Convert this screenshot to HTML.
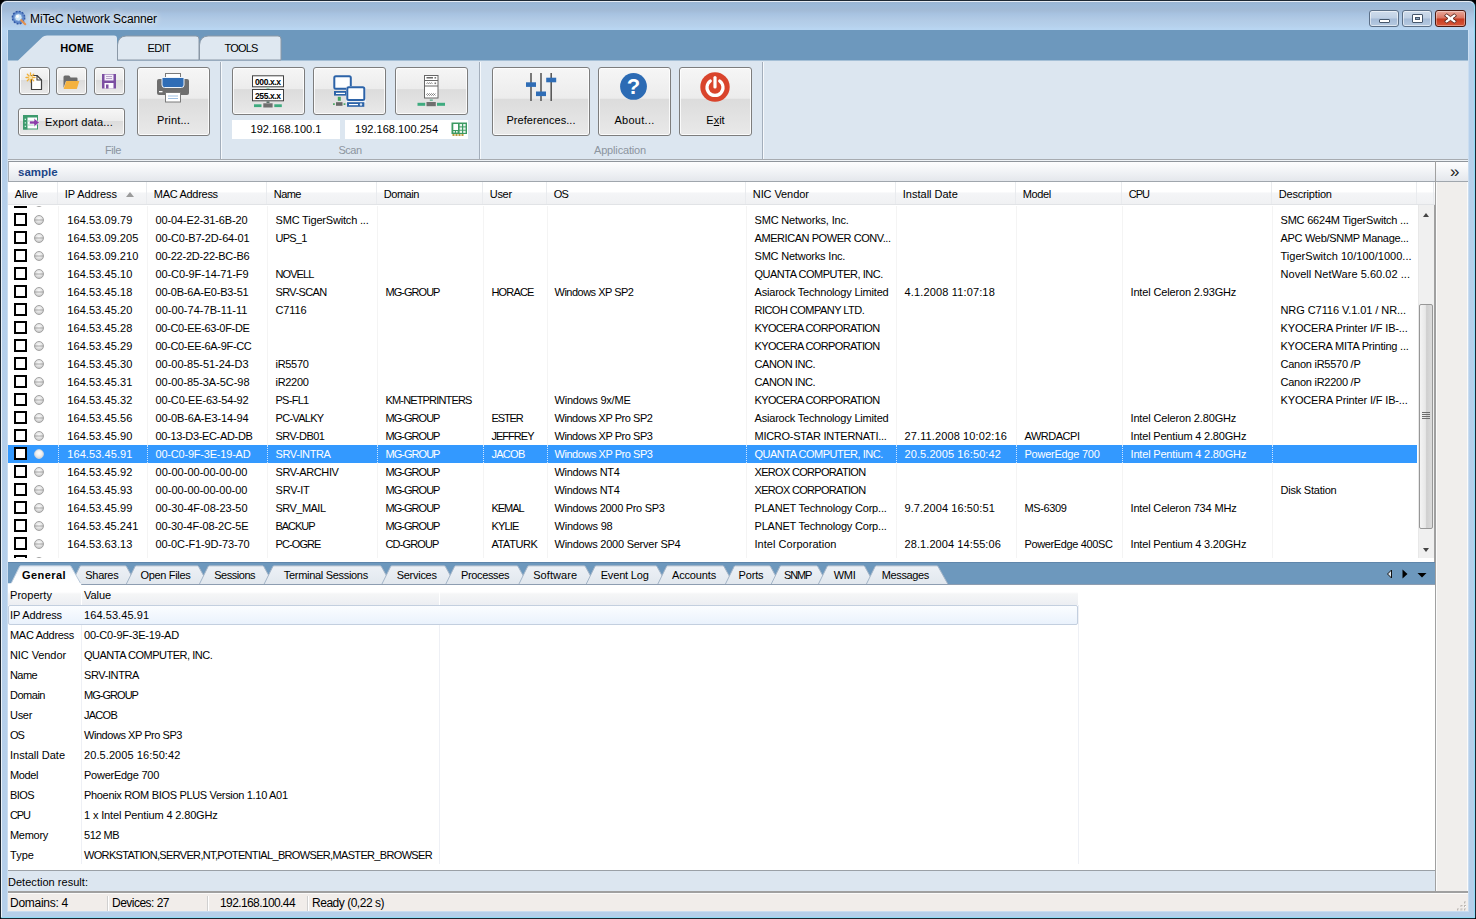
<!DOCTYPE html>
<html lang="en"><head><meta charset="utf-8"><title>MiTeC Network Scanner</title>
<style>
html,body{margin:0;padding:0;}
body{width:1476px;height:919px;overflow:hidden;position:relative;background:#000;font-family:"Liberation Sans",sans-serif;font-size:11px;color:#000;}
div,span,i,b{box-sizing:border-box;}
i,b{font-style:normal;font-weight:normal;}
/* window frame */
#frame{position:absolute;left:0;top:0;width:1476px;height:919px;border-radius:7px 7px 2px 2px;background:linear-gradient(#9ab5d3 1px,#9bb9d9 4px,#a2bad6 9px,#a8c3e1 13px,#b2cbe6 19px,#b6d1ec 25px,#b9d6f2 28px,#b6d0eb 60px,#b5cfea 100%);border:1px solid #1c2733;}
#frame:before{content:"";position:absolute;left:0;top:0;right:0;bottom:0;border-radius:6px 6px 1px 1px;border:1px solid rgba(255,255,255,.75);border-right-color:#8fdcf6;border-bottom-color:#8fdcf6;}
#frameedge{position:absolute;left:7px;top:30px;width:1462px;height:882px;border:1px solid rgba(255,255,255,.28);border-top:none;}
#title{position:absolute;left:30px;top:11px;font-size:12px;line-height:16px;color:#000;white-space:nowrap;text-shadow:0 0 6px #fff,0 0 8px #fff;}
#appicon{position:absolute;left:11px;top:10px;width:16px;height:16px;}
.capbtn{position:absolute;top:10px;height:17px;width:30px;border:1px solid #5b6f87;border-radius:3px;background:linear-gradient(#cfdcec 0,#bfd0e4 48%,#a5bbd7 52%,#b6cae1 100%);box-shadow:inset 0 0 0 1px rgba(255,255,255,.55);}
.capbtn.close{border-color:#4a1a12;background:linear-gradient(#e9a99b 0,#d9735f 48%,#c5391f 52%,#d8583a 100%);box-shadow:inset 0 0 0 1px rgba(255,255,255,.35);}
.capbtn svg{position:absolute;left:0;top:0;}
/* client */
#client{position:absolute;left:8px;top:30px;width:1460px;height:881px;background:#dce6f0;}
#tabstrip{position:absolute;left:8px;top:30px;width:1460px;height:31px;background:#6d98bd;}
#tabstrip svg{position:absolute;left:0;top:0;}
.rtab{position:absolute;top:41px;font-size:11px;line-height:14px;text-align:center;white-space:nowrap;}
#ribbon{position:absolute;left:8px;top:60.5px;width:1460px;height:99.5px;background:#dce6f0;border-bottom:1px solid #a7abb0;}
#ribgap{position:absolute;left:8px;top:160px;width:1460px;height:1px;background:#eef2f6;}
.rsep{position:absolute;top:62px;width:2px;height:97px;border-left:1px solid #a3aebb;border-right:1px solid #f6f9fc;}
.glabel{position:absolute;top:143px;font-size:11px;line-height:14px;color:#8c959f;text-align:center;white-space:nowrap;}
.btn{position:absolute;border:1px solid #7d7d7d;border-radius:3px;background:linear-gradient(#f6f6f6 0,#ececec 45%,#dcdcdc 47%,#e9e9e9 100%);box-shadow:inset 0 0 0 1px rgba(255,255,255,.8);}
.btn svg,.ipf svg{position:absolute;}
.btn .t{position:absolute;left:0;right:0;text-align:center;font-size:11px;line-height:14px;white-space:nowrap;}
.ipf{position:absolute;top:120px;height:19px;background:#fff;font-size:11px;line-height:19px;text-align:center;white-space:nowrap;}
/* sample bar */
#samplebar{position:absolute;left:8px;top:161px;width:1427px;height:21px;border-top:1px solid #8f959c;border-left:1px solid #a9afb6;border-bottom:1px solid #a0a6ad;background:linear-gradient(#fdfdfe 0,#f1f3f6 50%,#e4e7ec 100%);}
#samplebar span{position:absolute;left:9px;top:3px;font-weight:bold;color:#1c4587;font-size:11.5px;line-height:14px;}
#sidecap{position:absolute;left:1436px;top:161px;width:32px;height:21px;border-top:1px solid #8f959c;border-bottom:1px solid #a0a6ad;background:linear-gradient(#fdfdfe 0,#f1f3f6 50%,#e4e7ec 100%);}
#sidecap span{position:absolute;left:14px;top:0.5px;font-size:17px;line-height:18px;color:#222;}
#sidepanel{position:absolute;left:1436px;top:182px;width:32px;height:709px;background:#f0eeec;border-left:1px solid #fbfbfb;border-right:1px solid #fbfbfb;}
.vline{position:absolute;left:1434px;top:161px;width:2px;height:730px;background:#a0a0a0;}
/* list */
#list{position:absolute;left:8px;top:206px;width:1409px;height:352px;background:#fff;overflow:hidden;}
#listbg{position:absolute;left:8px;top:183px;width:1427px;height:380px;background:#fff;}
.row{position:absolute;left:0;width:1409px;height:18px;line-height:18px;white-space:nowrap;}
.row .c{position:absolute;top:0;height:18px;padding-left:8.5px;overflow:hidden;}
.row.sel{background:#3399ff;color:#fff;}
.row.sel .c{border-left:1px dotted #cfe6ff;padding-left:7.5px;}
.cb{position:absolute;left:6px;top:2px;width:13px;height:13px;border:2px solid #000;background:#fff;}
.led{position:absolute;left:26px;top:4px;width:10px;height:10px;border-radius:50%;border:1px solid #a9a9a9;background:linear-gradient(transparent 40%,rgba(125,125,125,.5) 46%,rgba(125,125,125,.5) 54%,transparent 60%),radial-gradient(circle at 50% 38%,#fbfbfb 0,#e4e4e4 45%,#b8b8b8 100%);border-color:#a2a2a2;}
.row.sel .led{border-color:#c9d3df;background:radial-gradient(circle at 50% 38%,#fff 0,#efefef 45%,#cfcfcf 100%);}
#lhead{position:absolute;left:8px;top:182px;width:1427px;height:23px;background:linear-gradient(#fff 0,#fff 45%,#f4f5f7 50%,#f0f1f3 100%);border-bottom:1px solid #e1e3e6;}
#lhead .h{position:absolute;top:0;height:22px;line-height:24px;padding-left:6.8px;border-right:1px solid #e9ebee;white-space:nowrap;}
.sortup{position:absolute;left:68px;top:10px;width:0;height:0;border-left:4.5px solid transparent;border-right:4.5px solid transparent;border-bottom:5px solid #9b9b9b;}
/* vscroll */
#vs{position:absolute;left:1418px;top:205px;width:16px;height:353px;background:#f0f0f0;border-left:1px solid #e8e8e8;}
#vs .thumb{position:absolute;left:0px;top:99px;width:14px;height:225px;border:1px solid #979797;border-radius:2px;background:linear-gradient(90deg,#f4f4f4 0,#e8e8e8 45%,#cfcfcf 55%,#dcdcdc 100%);}
#vs .grp{position:absolute;left:3px;top:207px;width:8px;height:1px;background:#6e6e6e;box-shadow:0 2px 0 #6e6e6e,0 4px 0 #6e6e6e,0 6px 0 #6e6e6e;}
.tri-up{position:absolute;left:3.7px;top:8px;width:0;height:0;border-left:3.5px solid transparent;border-right:3.5px solid transparent;border-bottom:4px solid #444;}
.tri-dn{position:absolute;left:3.7px;top:343px;width:0;height:0;border-left:3.5px solid transparent;border-right:3.5px solid transparent;border-top:4px solid #444;}
/* bottom tabs */
#btabs{position:absolute;left:8px;top:562px;width:1427px;height:23px;background:#6d98bd;}
#btabs svg{position:absolute;left:0;top:0;}
.bt{position:absolute;top:568px;font-size:11px;line-height:14px;white-space:nowrap;text-align:center;}
/* prop grid */
#pgrid{position:absolute;left:8px;top:585px;width:1427px;height:285px;background:#fff;}
.phead{position:absolute;left:0;top:0;width:1070px;height:20px;line-height:20px;background:linear-gradient(#fff 0,#fff 35%,#f5f6f7 45%,#eceef2 100%);}
.phs{position:absolute;top:7px;width:1px;height:13px;background:#fff;}
.pk{position:absolute;left:2px;top:0;white-space:nowrap;}
.pv{position:absolute;left:76px;top:0;white-space:nowrap;}
.prow{position:absolute;left:0;width:1070px;height:20px;line-height:20px;}
.pcol{position:absolute;top:20px;width:1px;height:259px;background:#eef0f5;}
.phot{position:absolute;left:0;top:20px;width:1070px;height:20px;border:1px solid #c3cfdf;border-radius:2px;background:linear-gradient(#fbfdff 0,#eaf2fc 100%);}
#detect{position:absolute;left:8px;top:870px;width:1427px;height:21px;line-height:22px;background:#dce6f0;border-top:1px solid #9aa0a6;padding-left:0;}
#hline{position:absolute;left:8px;top:891px;width:1460px;height:2px;background:#a0a0a0;}
#status{position:absolute;left:8px;top:893px;width:1460px;height:18px;background:#f1edea;border-top:1px solid #fbfaf9;font-size:12px;line-height:19px;}
#status span{position:absolute;top:0;white-space:nowrap;}
#status i{position:absolute;top:2px;width:2px;height:15px;border-left:1px solid #d0d0d0;border-right:1px solid #fff;}
.grip{position:absolute;right:1px;bottom:1px;width:11px;height:11px;}
.tabarrows{position:absolute;left:1385px;top:568px;width:50px;height:12px;}

.gl{position:absolute;top:0;width:1px;height:352px;background:#f4f4f4;}

</style></head>
<body>
<div id="frame"></div>
<div id="frameedge"></div>
<div id="appicon"><svg width="16" height="16" viewBox="0 0 18 18"><circle cx="8.5" cy="8.5" r="7" fill="#5f87c9" stroke="#2f57a5" stroke-width="1.6" stroke-dasharray="2.2 1.4"/><circle cx="8.3" cy="8.3" r="4.2" fill="#cfe6f7" stroke="#7aa3d6" stroke-width="1"/><circle cx="7.3" cy="7.3" r="1.6" fill="#fff"/><path d="M11.5 11.5 L16 16" stroke="#e2904f" stroke-width="2.4" stroke-linecap="round"/></svg></div>
<div id="title"><span style="letter-spacing:-0.113px">MiTeC Network Scanner</span></div>
<div class="capbtn" style="left:1369px"><svg width="28" height="15"><rect x="9.500" y="8.500" width="10" height="3" fill="#fff" stroke="#45566b" stroke-width="1" rx=".5"/></svg></div>
<div class="capbtn" style="left:1402px"><svg width="28" height="15"><rect x="9.500" y="3.500" width="10" height="8" fill="#fff" stroke="#45566b" stroke-width="1" rx=".5"/><rect x="12.500" y="6.500" width="4" height="2" fill="#8da3bd" stroke="#45566b" stroke-width="1"/></svg></div>
<div class="capbtn close" style="left:1435px;width:31px"><svg width="29" height="15"><path d="M10.800 2.800 L14.500 5.600 L18.200 2.800 L20.600 4.800 L17 7.500 L20.600 10.200 L18.200 12.200 L14.500 9.400 L10.800 12.200 L8.400 10.200 L12 7.500 L8.400 4.800 Z" fill="#fff" stroke="#5e2a20" stroke-width="1" stroke-linejoin="round"/></svg></div>
<div id="client"></div>
<div id="tabstrip"><svg width="1460" height="31" viewBox="0 0 1460 31">
<path d="M0 31 L0 30.500 L10 30.500 L34.500 7 Q36 5.500 39 5.500 L106 5.500 Q109 5.500 109 8.500 L109 30.500 L1460 30.500 L1460 31 Z" fill="#dce6f0"/>
<path d="M109.500 30 L109.500 15 Q110 6.500 118 6 L188 6 Q191 6 191 9 L191 30 L109.500 30 Z" fill="#dfe8f1" stroke="#8b98a6" stroke-width="1"/>
<path d="M191.500 30 L191.500 15 Q192 6.500 200 6 L270 6 Q273 6 273 9 L273 30 L191.500 30 Z" fill="#dfe8f1" stroke="#8b98a6" stroke-width="1"/>
</svg></div>
<div class="rtab" style="left:44px;width:66px;font-weight:bold"><span style="letter-spacing:0.125px">HOME</span></div>
<div class="rtab" style="left:126px;width:66px"><span style="letter-spacing:-0.516px">EDIT</span></div>
<div class="rtab" style="left:208px;width:66px"><span style="letter-spacing:-0.819px">TOOLS</span></div>
<div id="ribbon"></div><div id="ribgap"></div>
<div class="rsep" style="left:220px"></div>
<div class="rsep" style="left:479px"></div>
<div class="rsep" style="left:762px"></div>
<div class="glabel" style="left:93px;width:40px"><span style="letter-spacing:-0.434px">File</span></div>
<div class="glabel" style="left:330px;width:40px"><span style="letter-spacing:-0.52px">Scan</span></div>
<div class="glabel" style="left:580px;width:80px"><span style="letter-spacing:-0.166px">Application</span></div>
<!-- file group -->
<div class="btn" style="left:19px;top:67px;width:31px;height:28px"><svg style="left:5px;top:4px" width="18" height="18" viewBox="0 0 18 18"><path d="M6.500 3.500 H12 L16.500 8 V17.500 H6.500 Z" fill="#fff" stroke="#3f3f3f" stroke-width="1.2" stroke-linejoin="round"/><path d="M12 3.500 V8 H16.500" fill="none" stroke="#3f3f3f" stroke-width="1.100"/><g stroke="#f1b13a" stroke-width="1.300" stroke-linecap="round"><path d="M5.500 1 V10"/><path d="M1 5.500 H10"/><path d="M2.300 2.300 L8.700 8.700"/><path d="M8.700 2.300 L2.300 8.700"/></g><circle cx="5.500" cy="5.500" r="1.700" fill="#fbe6ad"/></svg></div>
<div class="btn" style="left:56px;top:67px;width:31px;height:28px"><svg style="left:5px;top:4px" width="18" height="18" viewBox="0 0 18 18"><path d="M1.500 5 Q1.500 3.500 3 3.500 H6.500 Q7.500 3.500 8 4.500 L8.500 5.500 H14.500 Q15.500 5.500 15.500 6.500 V9 H4 L1.500 16 Z" fill="#6b6b6b"/><path d="M4.300 9 H17.300 L14.800 17 H1.600 Z" fill="#f4b23f"/></svg></div>
<div class="btn" style="left:94px;top:67px;width:31px;height:28px"><svg style="left:6px;top:5px" width="16" height="16" viewBox="0 0 16 16"><path d="M1 1 H15 V15.500 H1 Z" fill="#7c4fa2"/><rect x="3.500" y="1.500" width="9" height="6" fill="#f4eef9"/><path d="M5 3.500 H11 M5 5.500 H11" stroke="#b7a3c9" stroke-width="1"/><rect x="3.500" y="10" width="9" height="5.500" fill="#fdfbff"/><rect x="5" y="11.500" width="2.500" height="4" fill="#7c4fa2"/></svg></div>
<div class="btn" style="left:18px;top:108px;width:107px;height:28px"><svg style="left:4px;top:6px" width="17" height="15" viewBox="0 0 17 15"><rect x="0.500" y="0.500" width="14" height="13.500" fill="#fff" stroke="#3d9a6d" stroke-width="1"/><rect x="0" y="0" width="4.500" height="14.500" fill="#3d9a6d"/><rect x="0" y="0" width="15" height="2.500" fill="#3d9a6d"/><path d="M5 6 H14 M5 10 H14" stroke="#9fd2b8" stroke-width="1"/><g fill="#c8ecd9"><rect x="1.700" y="3.700" width="1.300" height="1.300"/><rect x="1.700" y="7.200" width="1.300" height="1.300"/><rect x="1.700" y="10.700" width="1.300" height="1.300"/></g><path d="M6.500 6 H11 V3.300 L16.500 7.500 L11 11.700 V9 H6.500 Z" fill="#8c3fa9" stroke="#fff" stroke-width=".6"/></svg><span class="t" style="left:26px;right:auto;top:6px"><span style="letter-spacing:0.19px">Export data...</span></span></div>
<div class="btn" style="left:137px;top:67px;width:73px;height:69px"><svg style="left:19px;top:5px" width="32" height="30" viewBox="0 0 32 30"><rect x="8.500" y="0.500" width="15" height="8" fill="#fff" stroke="#7a7a7a" stroke-width="1"/><rect x="0" y="6" width="32" height="16" rx="2" fill="#6e6e6e"/><path d="M5 4.500 H27 V12 Q27 14.500 24.500 14.500 H7.500 Q5 14.500 5 12 Z" fill="#2f6db6" stroke="#eef4fb" stroke-width="1"/><rect x="2" y="18" width="3.500" height="1.300" fill="#fff"/><rect x="8.500" y="19.500" width="15" height="9.500" fill="#fff" stroke="#7a7a7a" stroke-width="1"/><path d="M11 23 H21 M11 25.500 H21" stroke="#9fc0e2" stroke-width="1"/></svg><span class="t" style="top:45px"><span style="letter-spacing:0.163px">Print...</span></span></div>
<!-- scan group -->
<div class="btn" style="left:232px;top:67px;width:73px;height:48px"><svg style="left:17px;top:5px" width="38" height="38" viewBox="0 0 38 38"><rect x="2.500" y="2.800" width="31" height="11" fill="#fff" stroke="#404040" stroke-width="1"/><rect x="2.500" y="16.500" width="31" height="11.300" fill="#fff" stroke="#404040" stroke-width="1"/><rect x="16.500" y="14.300" width="3" height="1.700" fill="#9fd3bd"/><rect x="16.500" y="28.300" width="3" height="1.700" fill="#5d6f69"/><text x="18" y="11.500" text-anchor="middle" font-family="Liberation Sans, sans-serif" font-weight="bold" font-size="8.500" fill="#000" textLength="26">000.x.x</text><text x="18" y="25.500" text-anchor="middle" font-family="Liberation Sans, sans-serif" font-weight="bold" font-size="8.500" fill="#000" textLength="26">255.x.x</text><rect x="4" y="31.300" width="7.500" height="2.800" fill="#3eab7f"/><rect x="13.300" y="30.300" width="9.300" height="4.200" fill="#6f6f6f"/><rect x="24.300" y="31.300" width="7.500" height="2.800" fill="#3eab7f"/></svg></div>
<div class="btn" style="left:313px;top:67px;width:73px;height:48px"><svg style="left:17px;top:5px" width="38" height="38" viewBox="0 0 38 38"><rect x="3.300" y="3.300" width="16.500" height="12.500" rx="1.500" fill="#fdfeff" stroke="#2c63a8" stroke-width="2"/><rect x="3" y="18" width="13" height="4.600" fill="#2c63a8"/><rect x="5" y="19.800" width="9" height="1.200" fill="#fff"/><rect x="6.800" y="23.800" width="3" height="4" fill="#43a45e"/><rect x="5" y="29.200" width="6.500" height="3.600" fill="#666"/><rect x="2" y="30.300" width="1.800" height="1.600" fill="#43a45e"/><rect x="12.600" y="30.300" width="1.800" height="1.600" fill="#43a45e"/><rect x="15" y="13" width="20" height="17" fill="#eef2f6" opacity=".9"/><rect x="16.300" y="14.200" width="17" height="12.700" rx="1.500" fill="#fdfeff" stroke="#2c63a8" stroke-width="2"/><rect x="16" y="29.200" width="17.300" height="4.600" fill="#2c63a8"/><rect x="18" y="31" width="9" height="1.200" fill="#fff"/><circle cx="30" cy="31.500" r="1.200" fill="#dbe9f7"/></svg></div>
<div class="btn" style="left:395px;top:67px;width:73px;height:48px"><svg style="left:19px;top:5px" width="34" height="36" viewBox="0 0 34 36"><rect x="9.500" y="2.500" width="13.500" height="22.500" fill="#fff" stroke="#676767" stroke-width="1"/><path d="M9.500 7.500 H23 M9.500 13 H23" stroke="#676767" stroke-width="1"/><path d="M11.500 4.800 H18" stroke="#444" stroke-width="1.200"/><rect x="19.500" y="4" width="1.600" height="1.600" fill="#777"/><path d="M11.500 10.800 L12.500 9.600 L13.500 10.800 L14.500 9.600 L15.500 10.800 L16.500 9.600 L17.500 10.800" fill="none" stroke="#666" stroke-width=".7"/><rect x="19.500" y="9.500" width="1.600" height="1.600" fill="#777"/><path d="M11.500 21.500 l1 -1 l1 1 l1 -1 l1 1 l1 -1 l1 1 l1 -1 l1 1 l1 -1 M11.500 21.500 l1 1 l1 -1 l1 1 l1 -1 l1 1 l1 -1 l1 1 l1 -1 l1 1" fill="none" stroke="#555" stroke-width=".6"/><rect x="14.800" y="26.500" width="3" height="1.300" fill="#57b08c"/><rect x="2.500" y="29.800" width="7.700" height="3" fill="#3eab7f"/><rect x="11.500" y="29" width="9.300" height="4.200" fill="#6f6f6f"/><rect x="22" y="29.800" width="8" height="3" fill="#3eab7f"/></svg></div>
<div class="ipf" style="left:232px;width:108px"><span style="letter-spacing:0.057px">192.168.100.1</span></div>
<div class="ipf" style="left:345px;width:123px"><span style="position:absolute;left:10px;top:0"><span style="letter-spacing:0.034px">192.168.100.254</span></span><svg style="left:106px;top:2px" width="17" height="15" viewBox="0 0 17 15"><rect x="0.500" y="0.500" width="15.500" height="11.500" fill="#3c9a62"/><rect x="2.300" y="2" width="4.700" height="6" fill="#fff"/><g fill="#eaf6ee"><rect x="8.600" y="2" width="2.400" height="2.400"/><rect x="12.200" y="2" width="2.400" height="2.400"/><rect x="8.600" y="5.400" width="2.400" height="2.400"/><rect x="12.200" y="5.400" width="2.400" height="2.400"/><rect x="8.600" y="8.700" width="2.400" height="2.200"/><rect x="12.200" y="8.700" width="2.400" height="2.200"/><rect x="2.300" y="9" width="1.600" height="1.600"/><rect x="5" y="9" width="1.600" height="1.600"/></g><g fill="#b89a3c"><rect x="1.500" y="12" width="2" height="2"/><rect x="4.500" y="12" width="2" height="2"/><rect x="7.500" y="12" width="2" height="2"/><rect x="10.500" y="12" width="2" height="2"/></g></svg></div>
<!-- app group -->
<div class="btn" style="left:492px;top:67px;width:98px;height:69px"><svg style="left:30px;top:4px" width="36" height="30" viewBox="0 0 36 30"><g stroke="#5a5a5a" stroke-width="1.600"><path d="M8 1 V29"/><path d="M18 1 V29"/><path d="M28.200 1 V29"/></g><g fill="#2f6db6"><rect x="3" y="10.300" width="10" height="4.600"/><rect x="13" y="19.500" width="10" height="4.600"/><rect x="23.200" y="5.700" width="10" height="4.600"/></g></svg><span class="t" style="top:45px"><span style="letter-spacing:0.044px">Preferences...</span></span></div>
<div class="btn" style="left:598px;top:67px;width:73px;height:69px"><svg style="left:20px;top:4px" width="30" height="30" viewBox="0 0 30 30"><circle cx="14.500" cy="14.400" r="13.400" fill="#2c6bb4"/><text x="14.500" y="22" text-anchor="middle" font-family="Liberation Sans, sans-serif" font-weight="bold" font-size="22" fill="#fff">?</text></svg><span class="t" style="top:45px"><span style="letter-spacing:0.272px">About...</span></span></div>
<div class="btn" style="left:679px;top:67px;width:73px;height:69px"><svg style="left:19px;top:3px" width="32" height="32" viewBox="0 0 32 32"><circle cx="16" cy="16" r="14.700" fill="#d9442c"/><path d="M11.300 10 A8 8 0 1 0 20.700 10" fill="none" stroke="#fff" stroke-width="3.200" stroke-linecap="round"/><path d="M16 6.500 V16" stroke="#fff" stroke-width="3.200" stroke-linecap="round"/></svg><span class="t" style="top:45px">E<u>x</u>it</span></div>
<div id="listbg"></div>
<div class="vline"></div>
<div id="hline"></div>
<div id="samplebar"><span>sample</span></div>
<div id="sidecap"><span>&raquo;</span></div>
<div id="sidepanel"></div>
<div id="list">
<i class="gl" style="left:50px"></i><i class="gl" style="left:139px"></i><i class="gl" style="left:259px"></i><i class="gl" style="left:369px"></i><i class="gl" style="left:475px"></i><i class="gl" style="left:539px"></i><i class="gl" style="left:738px"></i><i class="gl" style="left:888px"></i><i class="gl" style="left:1008px"></i><i class="gl" style="left:1114px"></i><i class="gl" style="left:1264px"></i>
<div class="row" style="top:-13px"><i class="cb"></i><i class="led"></i></div>
<div class="row" style="top:5px"><i class="cb"></i><i class="led"></i><span class="c" style="left:50px;width:89px;padding-left:9.3px"><span style="letter-spacing:0.072px">164.53.09.79</span></span><span class="c" style="left:139px;width:120px"><span style="letter-spacing:-0.128px">00-04-E2-31-6B-20</span></span><span class="c" style="left:259px;width:110px"><span style="letter-spacing:-0.183px">SMC TigerSwitch ...</span></span><span class="c" style="left:738px;width:150px"><span style="letter-spacing:-0.166px">SMC Networks, Inc.</span></span><span class="c" style="left:1264px;width:145px"><span style="letter-spacing:-0.207px">SMC 6624M TigerSwitch ...</span></span></div>
<div class="row" style="top:23px"><i class="cb"></i><i class="led"></i><span class="c" style="left:50px;width:89px;padding-left:9.3px"><span style="letter-spacing:0.057px">164.53.09.205</span></span><span class="c" style="left:139px;width:120px"><span style="letter-spacing:-0.153px">00-C0-B7-2D-64-01</span></span><span class="c" style="left:259px;width:110px"><span style="letter-spacing:-0.772px">UPS_1</span></span><span class="c" style="left:738px;width:150px"><span style="letter-spacing:-0.435px">AMERICAN POWER CONV...</span></span><span class="c" style="left:1264px;width:145px"><span style="letter-spacing:-0.301px">APC Web/SNMP Manage...</span></span></div>
<div class="row" style="top:41px"><i class="cb"></i><i class="led"></i><span class="c" style="left:50px;width:89px;padding-left:9.3px"><span style="letter-spacing:0.057px">164.53.09.210</span></span><span class="c" style="left:139px;width:120px"><span style="letter-spacing:-0.225px">00-22-2D-22-BC-B6</span></span><span class="c" style="left:738px;width:150px"><span style="letter-spacing:-0.202px">SMC Networks Inc.</span></span><span class="c" style="left:1264px;width:145px"><span style="letter-spacing:0.025px">TigerSwitch 10/100/1000...</span></span></div>
<div class="row" style="top:59px"><i class="cb"></i><i class="led"></i><span class="c" style="left:50px;width:89px;padding-left:9.3px"><span style="letter-spacing:0.072px">164.53.45.10</span></span><span class="c" style="left:139px;width:120px"><span style="letter-spacing:-0.104px">00-C0-9F-14-71-F9</span></span><span class="c" style="left:259px;width:110px"><span style="letter-spacing:-0.904px">NOVELL</span></span><span class="c" style="left:738px;width:150px"><span style="letter-spacing:-0.492px">QUANTA COMPUTER, INC.</span></span><span class="c" style="left:1264px;width:145px"><span style="letter-spacing:0.034px">Novell NetWare 5.60.02 ...</span></span></div>
<div class="row" style="top:77px"><i class="cb"></i><i class="led"></i><span class="c" style="left:50px;width:89px;padding-left:9.3px"><span style="letter-spacing:0.072px">164.53.45.18</span></span><span class="c" style="left:139px;width:120px"><span style="letter-spacing:-0.212px">00-0B-6A-E0-B3-51</span></span><span class="c" style="left:259px;width:110px"><span style="letter-spacing:-0.631px">SRV-SCAN</span></span><span class="c" style="left:369px;width:106px"><span style="letter-spacing:-0.967px">MG-GROUP</span></span><span class="c" style="left:475px;width:64px"><span style="letter-spacing:-0.844px">HORACE</span></span><span class="c" style="left:539px;width:199px;padding-left:7.5px"><span style="letter-spacing:-0.501px">Windows XP SP2</span></span><span class="c" style="left:738px;width:150px"><span style="letter-spacing:-0.193px">Asiarock Technology Limited</span></span><span class="c" style="left:888px;width:120px"><span style="letter-spacing:0.148px">4.1.2008 11:07:18</span></span><span class="c" style="left:1114px;width:150px"><span style="letter-spacing:-0.15px">Intel Celeron 2.93GHz</span></span></div>
<div class="row" style="top:95px"><i class="cb"></i><i class="led"></i><span class="c" style="left:50px;width:89px;padding-left:9.3px"><span style="letter-spacing:0.072px">164.53.45.20</span></span><span class="c" style="left:139px;width:120px"><span style="letter-spacing:0.04px">00-00-74-7B-11-11</span></span><span class="c" style="left:259px;width:110px"><span style="letter-spacing:-0.122px">C7116</span></span><span class="c" style="left:738px;width:150px"><span style="letter-spacing:-0.527px">RICOH COMPANY LTD.</span></span><span class="c" style="left:1264px;width:145px"><span style="letter-spacing:-0.07px">NRG C7116 V.1.01 / NR...</span></span></div>
<div class="row" style="top:113px"><i class="cb"></i><i class="led"></i><span class="c" style="left:50px;width:89px;padding-left:9.3px"><span style="letter-spacing:0.072px">164.53.45.28</span></span><span class="c" style="left:139px;width:120px"><span style="letter-spacing:-0.332px">00-C0-EE-63-0F-DE</span></span><span class="c" style="left:738px;width:150px"><span style="letter-spacing:-0.649px">KYOCERA CORPORATION</span></span><span class="c" style="left:1264px;width:145px"><span style="letter-spacing:-0.143px">KYOCERA Printer I/F IB-...</span></span></div>
<div class="row" style="top:131px"><i class="cb"></i><i class="led"></i><span class="c" style="left:50px;width:89px;padding-left:9.3px"><span style="letter-spacing:0.072px">164.53.45.29</span></span><span class="c" style="left:139px;width:120px"><span style="letter-spacing:-0.322px">00-C0-EE-6A-9F-CC</span></span><span class="c" style="left:738px;width:150px"><span style="letter-spacing:-0.649px">KYOCERA CORPORATION</span></span><span class="c" style="left:1264px;width:145px"><span style="letter-spacing:-0.223px">KYOCERA MITA Printing ...</span></span></div>
<div class="row" style="top:149px"><i class="cb"></i><i class="led"></i><span class="c" style="left:50px;width:89px;padding-left:9.3px"><span style="letter-spacing:0.072px">164.53.45.30</span></span><span class="c" style="left:139px;width:120px"><span style="letter-spacing:-0.033px">00-00-85-51-24-D3</span></span><span class="c" style="left:259px;width:110px"><span style="letter-spacing:-0.31px">iR5570</span></span><span class="c" style="left:738px;width:150px"><span style="letter-spacing:-0.408px">CANON INC.</span></span><span class="c" style="left:1264px;width:145px"><span style="letter-spacing:-0.252px">Canon iR5570 /P</span></span></div>
<div class="row" style="top:167px"><i class="cb"></i><i class="led"></i><span class="c" style="left:50px;width:89px;padding-left:9.3px"><span style="letter-spacing:0.072px">164.53.45.31</span></span><span class="c" style="left:139px;width:120px"><span style="letter-spacing:-0.046px">00-00-85-3A-5C-98</span></span><span class="c" style="left:259px;width:110px"><span style="letter-spacing:-0.31px">iR2200</span></span><span class="c" style="left:738px;width:150px"><span style="letter-spacing:-0.408px">CANON INC.</span></span><span class="c" style="left:1264px;width:145px"><span style="letter-spacing:-0.252px">Canon iR2200 /P</span></span></div>
<div class="row" style="top:185px"><i class="cb"></i><i class="led"></i><span class="c" style="left:50px;width:89px;padding-left:9.3px"><span style="letter-spacing:0.072px">164.53.45.32</span></span><span class="c" style="left:139px;width:120px"><span style="letter-spacing:-0.176px">00-C0-EE-63-54-92</span></span><span class="c" style="left:259px;width:110px"><span style="letter-spacing:-0.716px">PS-FL1</span></span><span class="c" style="left:369px;width:106px"><span style="letter-spacing:-0.842px">KM-NETPRINTERS</span></span><span class="c" style="left:539px;width:199px;padding-left:7.5px"><span style="letter-spacing:-0.22px">Windows 9x/ME</span></span><span class="c" style="left:738px;width:150px"><span style="letter-spacing:-0.649px">KYOCERA CORPORATION</span></span><span class="c" style="left:1264px;width:145px"><span style="letter-spacing:-0.143px">KYOCERA Printer I/F IB-...</span></span></div>
<div class="row" style="top:203px"><i class="cb"></i><i class="led"></i><span class="c" style="left:50px;width:89px;padding-left:9.3px"><span style="letter-spacing:0.072px">164.53.45.56</span></span><span class="c" style="left:139px;width:120px"><span style="letter-spacing:-0.141px">00-0B-6A-E3-14-94</span></span><span class="c" style="left:259px;width:110px"><span style="letter-spacing:-0.699px">PC-VALKY</span></span><span class="c" style="left:369px;width:106px"><span style="letter-spacing:-0.967px">MG-GROUP</span></span><span class="c" style="left:475px;width:64px"><span style="letter-spacing:-1.137px">ESTER</span></span><span class="c" style="left:539px;width:199px;padding-left:7.5px"><span style="letter-spacing:-0.455px">Windows XP Pro SP2</span></span><span class="c" style="left:738px;width:150px"><span style="letter-spacing:-0.193px">Asiarock Technology Limited</span></span><span class="c" style="left:1114px;width:150px"><span style="letter-spacing:-0.15px">Intel Celeron 2.80GHz</span></span></div>
<div class="row" style="top:221px"><i class="cb"></i><i class="led"></i><span class="c" style="left:50px;width:89px;padding-left:9.3px"><span style="letter-spacing:0.072px">164.53.45.90</span></span><span class="c" style="left:139px;width:120px"><span style="letter-spacing:-0.335px">00-13-D3-EC-AD-DB</span></span><span class="c" style="left:259px;width:110px"><span style="letter-spacing:-0.5px">SRV-DB01</span></span><span class="c" style="left:369px;width:106px"><span style="letter-spacing:-0.967px">MG-GROUP</span></span><span class="c" style="left:475px;width:64px"><span style="letter-spacing:-0.987px">JEFFREY</span></span><span class="c" style="left:539px;width:199px;padding-left:7.5px"><span style="letter-spacing:-0.455px">Windows XP Pro SP3</span></span><span class="c" style="left:738px;width:150px"><span style="letter-spacing:-0.27px">MICRO-STAR INTERNATI...</span></span><span class="c" style="left:888px;width:120px"><span style="letter-spacing:0.12px">27.11.2008 10:02:16</span></span><span class="c" style="left:1008px;width:106px"><span style="letter-spacing:-0.484px">AWRDACPI</span></span><span class="c" style="left:1114px;width:150px"><span style="letter-spacing:-0.18px">Intel Pentium 4 2.80GHz</span></span></div>
<div class="row sel" style="top:239px"><i class="cb"></i><i class="led"></i><span class="c" style="left:50px;width:89px;padding-left:8.3px"><span style="letter-spacing:0.072px">164.53.45.91</span></span><span class="c" style="left:139px;width:120px"><span style="letter-spacing:-0.201px">00-C0-9F-3E-19-AD</span></span><span class="c" style="left:259px;width:110px"><span style="letter-spacing:-0.387px">SRV-INTRA</span></span><span class="c" style="left:369px;width:106px"><span style="letter-spacing:-0.967px">MG-GROUP</span></span><span class="c" style="left:475px;width:64px"><span style="letter-spacing:-0.738px">JACOB</span></span><span class="c" style="left:539px;width:199px;padding-left:6.5px"><span style="letter-spacing:-0.455px">Windows XP Pro SP3</span></span><span class="c" style="left:738px;width:150px"><span style="letter-spacing:-0.492px">QUANTA COMPUTER, INC.</span></span><span class="c" style="left:888px;width:120px"><span style="letter-spacing:0.088px">20.5.2005 16:50:42</span></span><span class="c" style="left:1008px;width:106px"><span style="letter-spacing:-0.252px">PowerEdge 700</span></span><span class="c" style="left:1114px;width:150px"><span style="letter-spacing:-0.18px">Intel Pentium 4 2.80GHz</span></span><span class="c" style="left:1264px;width:145px"></span></div>
<div class="row" style="top:257px"><i class="cb"></i><i class="led"></i><span class="c" style="left:50px;width:89px;padding-left:9.3px"><span style="letter-spacing:0.072px">164.53.45.92</span></span><span class="c" style="left:139px;width:120px"><span style="letter-spacing:0.016px">00-00-00-00-00-00</span></span><span class="c" style="left:259px;width:110px"><span style="letter-spacing:-0.405px">SRV-ARCHIV</span></span><span class="c" style="left:369px;width:106px"><span style="letter-spacing:-0.967px">MG-GROUP</span></span><span class="c" style="left:539px;width:199px;padding-left:7.5px"><span style="letter-spacing:-0.315px">Windows NT4</span></span><span class="c" style="left:738px;width:150px"><span style="letter-spacing:-0.686px">XEROX CORPORATION</span></span></div>
<div class="row" style="top:275px"><i class="cb"></i><i class="led"></i><span class="c" style="left:50px;width:89px;padding-left:9.3px"><span style="letter-spacing:0.072px">164.53.45.93</span></span><span class="c" style="left:139px;width:120px"><span style="letter-spacing:0.016px">00-00-00-00-00-00</span></span><span class="c" style="left:259px;width:110px"><span style="letter-spacing:-0.211px">SRV-IT</span></span><span class="c" style="left:369px;width:106px"><span style="letter-spacing:-0.967px">MG-GROUP</span></span><span class="c" style="left:539px;width:199px;padding-left:7.5px"><span style="letter-spacing:-0.315px">Windows NT4</span></span><span class="c" style="left:738px;width:150px"><span style="letter-spacing:-0.686px">XEROX CORPORATION</span></span><span class="c" style="left:1264px;width:145px"><span style="letter-spacing:-0.225px">Disk Station</span></span></div>
<div class="row" style="top:293px"><i class="cb"></i><i class="led"></i><span class="c" style="left:50px;width:89px;padding-left:9.3px"><span style="letter-spacing:0.072px">164.53.45.99</span></span><span class="c" style="left:139px;width:120px"><span style="letter-spacing:-0.02px">00-30-4F-08-23-50</span></span><span class="c" style="left:259px;width:110px"><span style="letter-spacing:-0.527px">SRV_MAIL</span></span><span class="c" style="left:369px;width:106px"><span style="letter-spacing:-0.967px">MG-GROUP</span></span><span class="c" style="left:475px;width:64px"><span style="letter-spacing:-1.059px">KEMAL</span></span><span class="c" style="left:539px;width:199px;padding-left:7.5px"><span style="letter-spacing:-0.309px">Windows 2000 Pro SP3</span></span><span class="c" style="left:738px;width:150px"><span style="letter-spacing:-0.203px">PLANET Technology Corp...</span></span><span class="c" style="left:888px;width:120px"><span style="letter-spacing:0.1px">9.7.2004 16:50:51</span></span><span class="c" style="left:1008px;width:106px"><span style="letter-spacing:-0.377px">MS-6309</span></span><span class="c" style="left:1114px;width:150px"><span style="letter-spacing:-0.164px">Intel Celeron 734 MHz</span></span></div>
<div class="row" style="top:311px"><i class="cb"></i><i class="led"></i><span class="c" style="left:50px;width:89px;padding-left:9.3px"><span style="letter-spacing:0.057px">164.53.45.241</span></span><span class="c" style="left:139px;width:120px"><span style="letter-spacing:-0.14px">00-30-4F-08-2C-5E</span></span><span class="c" style="left:259px;width:110px"><span style="letter-spacing:-1.042px">BACKUP</span></span><span class="c" style="left:369px;width:106px"><span style="letter-spacing:-0.967px">MG-GROUP</span></span><span class="c" style="left:475px;width:64px"><span style="letter-spacing:-0.838px">KYLIE</span></span><span class="c" style="left:539px;width:199px;padding-left:7.5px"><span style="letter-spacing:-0.192px">Windows 98</span></span><span class="c" style="left:738px;width:150px"><span style="letter-spacing:-0.203px">PLANET Technology Corp...</span></span></div>
<div class="row" style="top:329px"><i class="cb"></i><i class="led"></i><span class="c" style="left:50px;width:89px;padding-left:9.3px"><span style="letter-spacing:0.072px">164.53.63.13</span></span><span class="c" style="left:139px;width:120px"><span style="letter-spacing:-0.117px">00-0C-F1-9D-73-70</span></span><span class="c" style="left:259px;width:110px"><span style="letter-spacing:-0.906px">PC-OGRE</span></span><span class="c" style="left:369px;width:106px"><span style="letter-spacing:-0.861px">CD-GROUP</span></span><span class="c" style="left:475px;width:64px"><span style="letter-spacing:-0.413px">ATATURK</span></span><span class="c" style="left:539px;width:199px;padding-left:7.5px"><span style="letter-spacing:-0.237px">Windows 2000 Server SP4</span></span><span class="c" style="left:738px;width:150px"><span style="letter-spacing:0.04px">Intel Corporation</span></span><span class="c" style="left:888px;width:120px"><span style="letter-spacing:0.088px">28.1.2004 14:55:06</span></span><span class="c" style="left:1008px;width:106px"><span style="letter-spacing:-0.371px">PowerEdge 400SC</span></span><span class="c" style="left:1114px;width:150px"><span style="letter-spacing:-0.18px">Intel Pentium 4 3.20GHz</span></span></div>
<div class="row" style="top:347px"><i class="cb"></i><i class="led"></i></div>
</div>
<div id="lhead"><span class="h" style="left:0px;width:50px"><span style="letter-spacing:-0.169px">Alive</span></span><span class="h" style="left:50px;width:89px"><span style="letter-spacing:-0.1px">IP Address</span><b class="sortup"></b></span><span class="h" style="left:139px;width:120px"><span style="letter-spacing:-0.295px">MAC Address</span></span><span class="h" style="left:259px;width:110px"><span style="letter-spacing:-0.586px">Name</span></span><span class="h" style="left:369px;width:106px"><span style="letter-spacing:-0.484px">Domain</span></span><span class="h" style="left:475px;width:64px"><span style="letter-spacing:-0.309px">User</span></span><span class="h" style="left:539px;width:199px"><span style="letter-spacing:-0.953px">OS</span></span><span class="h" style="left:738px;width:150px"><span style="letter-spacing:-0.087px">NIC Vendor</span></span><span class="h" style="left:888px;width:120px"><span style="letter-spacing:-0.003px">Install Date</span></span><span class="h" style="left:1008px;width:106px"><span style="letter-spacing:-0.394px">Model</span></span><span class="h" style="left:1114px;width:150px"><span style="letter-spacing:-1.078px">CPU</span></span><span class="h" style="left:1264px;width:145px"><span style="letter-spacing:-0.185px">Description</span></span><span class="h last" style="left:1409px;width:17px"></span></div>
<div id="vs"><b class="tri-up"></b><div class="thumb"></div><b class="grp"></b><b class="tri-dn"></b></div>
<div id="btabs"><svg width="1427" height="23" viewBox="0 0 1427 23"><defs><linearGradient id="tg" x1="0" y1="0" x2="0" y2="1"><stop offset="0" stop-color="#edf1f6"/><stop offset="1" stop-color="#e1e7ee"/></linearGradient><linearGradient id="ta" x1="0" y1="0" x2="0" y2="1"><stop offset="0" stop-color="#eef3f9"/><stop offset=".6" stop-color="#fdfeff"/><stop offset="1" stop-color="#fff"/></linearGradient></defs><rect x="0" y="0" width="1427" height="1" fill="#5f86ab"/><path d="M62.9 22.5 L71.8 4.6 Q72.2 3.8 73.0 3.8 L117.2 3.8 Q118.0 3.8 118.5 4.6 L128.4 22.5 Z" fill="url(#tg)" stroke="#a3b4c7" stroke-width="1"/><path d="M118.1 22.5 L127.0 4.6 Q127.4 3.8 128.2 3.8 L189.3 3.8 Q190.1 3.8 190.6 4.6 L200.5 22.5 Z" fill="url(#tg)" stroke="#a3b4c7" stroke-width="1"/><path d="M191.2 22.5 L200.1 4.6 Q200.5 3.8 201.3 3.8 L254.5 3.8 Q255.3 3.8 255.8 4.6 L265.7 22.5 Z" fill="url(#tg)" stroke="#a3b4c7" stroke-width="1"/><path d="M255.9 22.5 L264.8 4.6 Q265.2 3.8 266.0 3.8 L372.2 3.8 Q373.0 3.8 373.4 4.6 L383.4 22.5 Z" fill="url(#tg)" stroke="#a3b4c7" stroke-width="1"/><path d="M373.7 22.5 L382.6 4.6 Q383.0 3.8 383.8 3.8 L436.1 3.8 Q436.9 3.8 437.4 4.6 L447.3 22.5 Z" fill="url(#tg)" stroke="#a3b4c7" stroke-width="1"/><path d="M437.6 22.5 L446.5 4.6 Q446.9 3.8 447.7 3.8 L508.9 3.8 Q509.7 3.8 510.1 4.6 L520.1 22.5 Z" fill="url(#tg)" stroke="#a3b4c7" stroke-width="1"/><path d="M510.7 22.5 L519.6 4.6 Q520.0 3.8 520.8 3.8 L576.1 3.8 Q576.9 3.8 577.4 4.6 L587.3 22.5 Z" fill="url(#tg)" stroke="#a3b4c7" stroke-width="1"/><path d="M578.0 22.5 L586.9 4.6 Q587.3 3.8 588.1 3.8 L647.8 3.8 Q648.6 3.8 649.0 4.6 L659.0 22.5 Z" fill="url(#tg)" stroke="#a3b4c7" stroke-width="1"/><path d="M649.6 22.5 L658.5 4.6 Q658.9 3.8 659.7 3.8 L714.8 3.8 Q715.6 3.8 716.0 4.6 L726.0 22.5 Z" fill="url(#tg)" stroke="#a3b4c7" stroke-width="1"/><path d="M717.2 22.5 L726.1 4.6 Q726.5 3.8 727.3 3.8 L761.2 3.8 Q762.0 3.8 762.5 4.6 L772.4 22.5 Z" fill="url(#tg)" stroke="#a3b4c7" stroke-width="1"/><path d="M763.0 22.5 L771.9 4.6 Q772.3 3.8 773.1 3.8 L808.5 3.8 Q809.3 3.8 809.8 4.6 L819.7 22.5 Z" fill="url(#tg)" stroke="#a3b4c7" stroke-width="1"/><path d="M810.2 22.5 L819.1 4.6 Q819.5 3.8 820.3 3.8 L855.5 3.8 Q856.3 3.8 856.8 4.6 L866.7 22.5 Z" fill="url(#tg)" stroke="#a3b4c7" stroke-width="1"/><path d="M858.2 22.5 L867.1 4.6 Q867.5 3.8 868.3 3.8 L928.9 3.8 Q929.7 3.8 930.1 4.6 L940.1 22.5 Z" fill="url(#tg)" stroke="#a3b4c7" stroke-width="1"/><path d="M2.6 22.5 L11.5 4.6 Q11.9 3.8 12.7 3.8 L62.0 3.8 Q62.8 3.8 63.2 4.6 L73.2 22.5 Z" fill="url(#ta)"/><path d="M2.6 22.5 L11.5 4.6 Q11.9 3.8 12.7 3.8 L62.0 3.8 Q62.8 3.8 63.2 4.6 L73.2 22.5" fill="none" stroke="#b9c9da" stroke-width="1"/><rect x="0" y="22" width="1427" height="1" fill="#8d9db1"/><path d="M0 22.3 L73.2 22.3" stroke="#fff" stroke-width="2"/></svg></div>
<div class="bt" style="left:14.4px;width:59.4px;font-weight:bold"><span style="letter-spacing:0.433px">General</span></div><div class="bt" style="left:74.7px;width:54.3px"><span style="letter-spacing:-0.31px">Shares</span></div><div class="bt" style="left:129.9px;width:71.2px"><span style="letter-spacing:-0.32px">Open Files</span></div><div class="bt" style="left:203.0px;width:63.3px"><span style="letter-spacing:-0.455px">Sessions</span></div><div class="bt" style="left:267.7px;width:116.3px"><span style="letter-spacing:-0.31px">Terminal Sessions</span></div><div class="bt" style="left:385.5px;width:62.4px"><span style="letter-spacing:-0.273px">Services</span></div><div class="bt" style="left:449.4px;width:71.3px"><span style="letter-spacing:-0.373px">Processes</span></div><div class="bt" style="left:522.5px;width:65.4px"><span style="letter-spacing:0.072px">Software</span></div><div class="bt" style="left:589.8px;width:69.8px"><span style="letter-spacing:-0.172px">Event Log</span></div><div class="bt" style="left:661.4px;width:65.2px"><span style="letter-spacing:-0.156px">Accounts</span></div><div class="bt" style="left:729.0px;width:44.0px"><span style="letter-spacing:-0.138px">Ports</span></div><div class="bt" style="left:774.8px;width:45.5px"><span style="letter-spacing:-1.195px">SNMP</span></div><div class="bt" style="left:822.0px;width:45.3px"><span style="letter-spacing:-0.203px">WMI</span></div><div class="bt" style="left:870.0px;width:70.7px"><span style="letter-spacing:-0.393px">Messages</span></div>
<div class="tabarrows"><svg width="50" height="12" viewBox="0 0 50 12"><path d="M6.5 2 L6.5 10 L2.5 6 Z" fill="#dfe8f1" stroke="#111" stroke-width="1"/><path d="M17.5 1.500 L17.5 10.5 L22.5 6 Z" fill="#000"/><path d="M32.5 5 L41.5 5 L37 9.5 Z" fill="#000"/></svg></div>
<div id="pgrid">
<div class="phead"><span class="pk"><span style="letter-spacing:0.053px">Property</span></span><span class="pv"><span style="letter-spacing:-0.066px">Value</span></span></div>
<div class="pcol" style="left:73px"></div><div class="pcol" style="left:431px"></div><div class="pcol" style="left:1070px"></div>
<div class="phot"></div><i class="phs" style="left:73px"></i><i class="phs" style="left:431px"></i>
<div class="prow" style="top:20px"><span class="pk"><span style="letter-spacing:-0.1px">IP Address</span></span><span class="pv"><span style="letter-spacing:0.072px">164.53.45.91</span></span></div>
<div class="prow" style="top:40px"><span class="pk"><span style="letter-spacing:-0.295px">MAC Address</span></span><span class="pv"><span style="letter-spacing:-0.201px">00-C0-9F-3E-19-AD</span></span></div>
<div class="prow" style="top:60px"><span class="pk"><span style="letter-spacing:-0.087px">NIC Vendor</span></span><span class="pv"><span style="letter-spacing:-0.492px">QUANTA COMPUTER, INC.</span></span></div>
<div class="prow" style="top:80px"><span class="pk"><span style="letter-spacing:-0.586px">Name</span></span><span class="pv"><span style="letter-spacing:-0.387px">SRV-INTRA</span></span></div>
<div class="prow" style="top:100px"><span class="pk"><span style="letter-spacing:-0.484px">Domain</span></span><span class="pv"><span style="letter-spacing:-0.967px">MG-GROUP</span></span></div>
<div class="prow" style="top:120px"><span class="pk"><span style="letter-spacing:-0.309px">User</span></span><span class="pv"><span style="letter-spacing:-0.738px">JACOB</span></span></div>
<div class="prow" style="top:140px"><span class="pk"><span style="letter-spacing:-0.953px">OS</span></span><span class="pv"><span style="letter-spacing:-0.455px">Windows XP Pro SP3</span></span></div>
<div class="prow" style="top:160px"><span class="pk"><span style="letter-spacing:-0.003px">Install Date</span></span><span class="pv"><span style="letter-spacing:0.088px">20.5.2005 16:50:42</span></span></div>
<div class="prow" style="top:180px"><span class="pk"><span style="letter-spacing:-0.394px">Model</span></span><span class="pv"><span style="letter-spacing:-0.252px">PowerEdge 700</span></span></div>
<div class="prow" style="top:200px"><span class="pk"><span style="letter-spacing:-0.574px">BIOS</span></span><span class="pv"><span style="letter-spacing:-0.32px">Phoenix ROM BIOS PLUS Version 1.10 A01</span></span></div>
<div class="prow" style="top:220px"><span class="pk"><span style="letter-spacing:-1.078px">CPU</span></span><span class="pv"><span style="letter-spacing:-0.144px">1 x Intel Pentium 4 2.80GHz</span></span></div>
<div class="prow" style="top:240px"><span class="pk"><span style="letter-spacing:-0.289px">Memory</span></span><span class="pv"><span style="letter-spacing:-0.487px">512 MB</span></span></div>
<div class="prow" style="top:260px"><span class="pk"><span style="letter-spacing:0.035px">Type</span></span><span class="pv"><span style="letter-spacing:-0.664px">WORKSTATION,SERVER,NT,POTENTIAL_BROWSER,MASTER_BROWSER</span></span></div>
</div>
<div id="detect"><span style="letter-spacing:0.03px">Detection result:</span></div>
<div id="status"><span style="left:2px"><span style="letter-spacing:-0.27px">Domains: 4</span></span><i style="left:99px"></i><span style="left:104px"><span style="letter-spacing:-0.518px">Devices: 27</span></span><i style="left:199px"></i><span style="left:212px"><span style="letter-spacing:-0.602px">192.168.100.44</span></span><i style="left:299px"></i><span style="left:304px"><span style="letter-spacing:-0.479px">Ready (0,22 s)</span></span><b class="grip"><svg width="11" height="11" viewBox="0 0 11 11"><g fill="#bdb8b3"><rect x="8" y="0.5" width="2" height="2"/><rect x="8" y="4" width="2" height="2"/><rect x="8" y="7.500" width="2" height="2"/><rect x="4.500" y="4" width="2" height="2"/><rect x="4.500" y="7.500" width="2" height="2"/><rect x="1" y="7.500" width="2" height="2"/></g><g fill="#fff"><rect x="9" y="1.500" width="1" height="1"/><rect x="9" y="5" width="1" height="1"/><rect x="9" y="8.500" width="1" height="1"/><rect x="5.500" y="5" width="1" height="1"/><rect x="5.500" y="8.500" width="1" height="1"/><rect x="2" y="8.500" width="1" height="1"/></g></svg></b></div>
</body></html>
